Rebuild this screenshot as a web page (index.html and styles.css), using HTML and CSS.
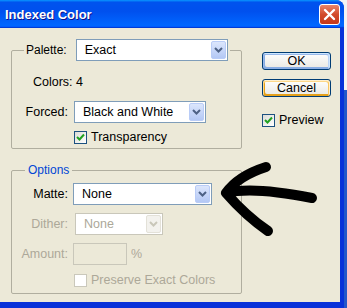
FILE: index.html
```html
<!DOCTYPE html>
<html lang="en">
<head>
  <meta charset="UTF-8">
  <title>Indexed Color</title>
  <link rel="stylesheet" href="styles.css">
</head>
<body>
  <div class="window">
    <div class="titlebar">
      <span class="title">Indexed Color</span>
      <span class="close">
        <svg width="13" height="13" viewBox="0 0 13 13"><path d="M2 2 L11 11 M11 2 L2 11" stroke="#fff" stroke-width="2.4" stroke-linecap="round"/></svg>
      </span>
    </div>

    <div class="client">
      <div class="groups">
        <fieldset class="group">
          <legend class="legend-row">
            <span>Palette:</span>
            <div class="select palette-select">Exact<span class="drop"><svg width="9" height="6" viewBox="0 0 9 6"><path d="M1 1 L4.5 4.5 L8 1" fill="none" stroke="#4d6185" stroke-width="2"/></svg></span></div>
          </legend>
          <div class="colors">Colors: 4</div>
          <div class="field forced">
            <span class="lbl">Forced:</span>
            <div class="select forced-select">Black and White<span class="drop"><svg width="9" height="6" viewBox="0 0 9 6"><path d="M1 1 L4.5 4.5 L8 1" fill="none" stroke="#4d6185" stroke-width="2"/></svg></span></div>
          </div>
          <div class="check trans">
            <span class="box"><svg width="11" height="11" viewBox="0 0 11 11"><path d="M2 5 L4.5 7.5 L9 2.5" fill="none" stroke="#21a121" stroke-width="2"/></svg></span>
            Transparency
          </div>
        </fieldset>

        <fieldset class="group options">
          <legend class="legend-title">Options</legend>
          <div class="field">
            <span class="lbl">Matte:</span>
            <div class="select matte-select">None<span class="drop"><svg width="9" height="6" viewBox="0 0 9 6"><path d="M1 1 L4.5 4.5 L8 1" fill="none" stroke="#4d6185" stroke-width="2"/></svg></span></div>
          </div>
          <div class="field off">
            <span class="lbl">Dither:</span>
            <div class="select dither-select">None<span class="drop"><svg width="9" height="6" viewBox="0 0 9 6"><path d="M1 1 L4.5 4.5 L8 1" fill="none" stroke="#c9c7ba" stroke-width="2"/></svg></span></div>
          </div>
          <div class="field off">
            <span class="lbl">Amount:</span>
            <div class="textbox"></div>
            <span class="pct">%</span>
          </div>
          <div class="check off preserve">
            <span class="box"></span>
            Preserve Exact Colors
          </div>
        </fieldset>
      </div>

      <div class="buttons">
        <div class="btn ok">OK</div>
        <div class="btn cancel">Cancel</div>
        <div class="check preview">
          <span class="box"><svg width="11" height="11" viewBox="0 0 11 11"><path d="M2 5 L4.5 7.5 L9 2.5" fill="none" stroke="#21a121" stroke-width="2"/></svg></span>
          Preview
        </div>
      </div>
    </div>
  </div>

  <svg class="arrow" width="347" height="308" viewBox="0 0 347 308">
    <path d="M266 167 Q238 176 226 193 Q246 216 268 231 M226 193 Q252 186 312 198" fill="none" stroke="#000" stroke-width="10" stroke-linecap="round" stroke-linejoin="round"/>
  </svg>
</body>
</html>
```

FILE: styles.css
```css
html, body {
  margin: 0;
  height: 100%;
}

body {
  position: relative;
  background: linear-gradient(#f4f4f4 0, #f4f4f4 90px, #2457c9 90px, #2457c9 100%);
  font-family: "Liberation Sans", Arial, sans-serif;
  font-size: 12px;
  color: #000;
  overflow: hidden;
}

.window {
  width: 344px;
  height: 320px;
  background: #0831d9;
  border-top-right-radius: 8px;
  overflow: hidden;
}

.titlebar {
  height: 28px;
  display: flex;
  align-items: center;
  justify-content: space-between;
  padding: 1px 4px 0 5px;
  box-sizing: border-box;
  background: linear-gradient(#0997ff 0%, #0053ee 8%, #0050ee 40%, #0066ff 88%, #0066ff 93%, #005bff 95%, #003dd7 96%, #003dd7 100%);
}

.title {
  color: #fff;
  font-weight: bold;
  font-size: 13px;
  text-shadow: 1px 1px #0f1089;
}

.close {
  width: 19px;
  height: 19px;
  border: 1px solid #fff;
  border-radius: 3px;
  background: linear-gradient(#e8856b, #d24a2a 50%, #c4381a);
  display: flex;
  align-items: center;
  justify-content: center;
}

.client {
  height: 274px;
  margin-right: 4px;
  background: #ece9d8;
  display: flex;
  padding: 11px 0 0 11px;
  box-sizing: border-box;
}

.groups {
  width: 231px;
}

.group {
  margin: 0;
  padding: 0 0 4px 0;
  border: 1px solid #b0ae9f;
  border-radius: 2px;
  min-width: 0;
}

.legend-row {
  display: flex;
  align-items: center;
  gap: 9px;
  margin-left: 12px;
  padding: 0 2px;
}

.legend-title {
  margin-left: 13px;
  padding: 0 3px;
  line-height: 14px;
  color: #0046d5;
}

.options {
  margin-top: 14px;
  padding-bottom: 6px;
}

.select {
  position: relative;
  height: 22px;
  box-sizing: border-box;
  border: 1px solid #7f9db9;
  background: #fff;
  padding-left: 8px;
  line-height: 20px;
  font-size: 12.5px;
}

.drop {
  position: absolute;
  right: 1px;
  top: 1px;
  width: 15px;
  height: 18px;
  box-sizing: border-box;
  border: 1px solid #b9ccf7;
  border-radius: 2px;
  background: linear-gradient(#dce6fc, #b4c8f5);
  display: flex;
  align-items: center;
  justify-content: center;
}

.palette-select { width: 152px; }
.forced-select { width: 132px; margin-left: 1px; }
.matte-select { width: 139px; }
.dither-select { width: 88px; margin-left: 2px; }

.colors {
  margin: 14px 0 0 21px;
  line-height: 14px;
  font-size: 12.5px;
}

.field {
  display: flex;
  align-items: center;
  gap: 5px;
  margin-top: 8px;
  font-size: 12.5px;
}

.forced {
  margin-top: 12px;
}

.options .field:first-of-type {
  margin-top: 6px;
}

.lbl {
  width: 56px;
  text-align: right;
}

.forced .lbl {
  width: 56px;
}

.off {
  color: #aca899;
}

.off .select,
.off .textbox {
  border-color: #c9c7ba;
}

.off .drop {
  border-color: #e3e1d8;
  background: #f3f2ee;
}

.textbox {
  width: 54px;
  height: 22px;
  box-sizing: border-box;
  border: 1px solid #7f9db9;
  background: #ece9d8;
}

.pct {
  margin-left: -1px;
}

.check {
  display: flex;
  align-items: center;
  gap: 4px;
  line-height: 14px;
  font-size: 12.5px;
}

.box {
  width: 13px;
  height: 13px;
  box-sizing: border-box;
  border: 1px solid #1c5180;
  background: linear-gradient(135deg, #dcdcd7, #fff);
  display: flex;
  align-items: center;
  justify-content: center;
}

.trans {
  margin: 7px 0 0 62px;
}

.preserve {
  margin: 8px 0 0 62px;
}

.off .box {
  border-color: #cac8bb;
  background: #fff;
}

.buttons {
  margin: 13px 0 0 20px;
  width: 69px;
}

.btn {
  height: 18px;
  box-sizing: border-box;
  border: 1px solid #003c74;
  border-radius: 3px;
  background: linear-gradient(#fff, #ecebe6 86%, #d6d0c5);
  text-align: center;
  line-height: 16px;
  font-size: 12.5px;
}

.ok {
  box-shadow: inset -1px 1px #cee7ff, inset 1px 2px #98b8ea, inset -2px 2px #bcd4f6, inset 1px -1px #89ade4, inset 2px -2px #89ade4;
}

.cancel {
  margin-top: 9px;
  box-shadow: inset -1px 1px #fff0cf, inset 1px 2px #fdd889, inset -2px 2px #fbc761, inset 2px -2px #e5a01a;
}

.preview {
  margin-top: 16px;
}

.arrow {
  position: absolute;
  left: 0;
  top: 0;
  pointer-events: none;
}
```
